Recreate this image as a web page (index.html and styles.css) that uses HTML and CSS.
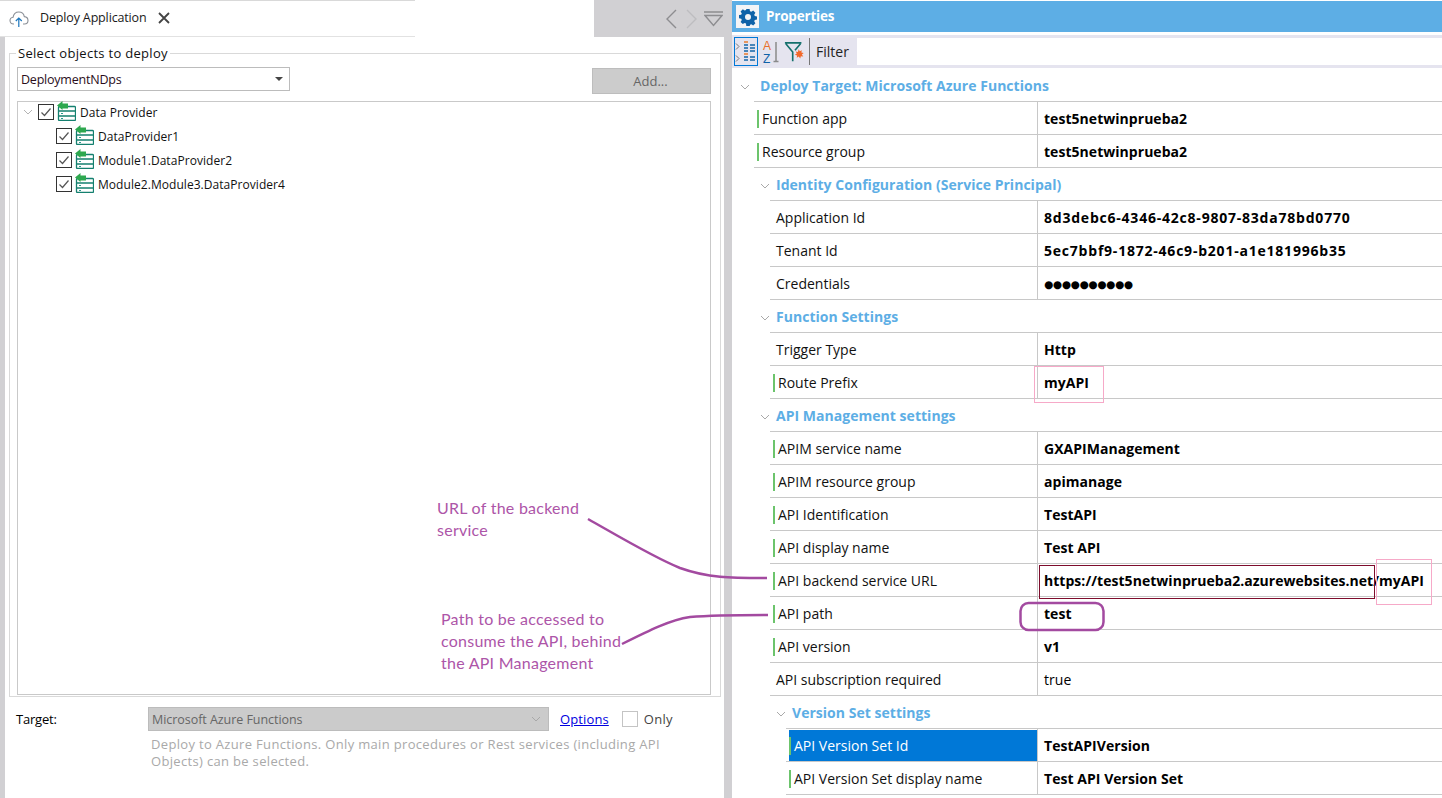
FILE: index.html
```html
<!DOCTYPE html>
<html lang="en">
<head>
<meta charset="utf-8">
<title>Deploy Application</title>
<link rel="stylesheet" href="styles.css">
</head>
<body>
<div class="app">
  <section class="deploy">
    <header class="tabs">
      <div class="tab">
        <svg class="tab-icon" width="20" height="18" viewBox="0 0 20 18"><path class="cloud" d="M5 14H4.500C2.500 14 1 12.500 1 10.600 1 8.800 2.400 7.400 4.100 7.200 4.600 4 7 2 9.800 2c2.700 0 5 1.900 5.500 4.600 2 .2 3.700 1.800 3.700 3.900 0 2-1.600 3.500-3.500 3.500H14"/><path class="cloud-arrow" d="M9.800 17V8M6.800 11l3-3 3 3"/></svg>
        <span class="tab-title">Deploy Application</span>
        <svg class="tab-close" width="12" height="12" viewBox="0 0 12 12"><path d="M1 1l10 10M11 1L1 11"/></svg>
      </div>
      <div class="tab-nav">
        <svg width="12" height="20" viewBox="0 0 12 20"><path class="nav-on" d="M11 1L2 10l9 9"/></svg>
        <svg width="12" height="20" viewBox="0 0 12 20"><path class="nav-off" d="M1 1l9 9-9 9"/></svg>
        <svg class="nav-menu" width="19" height="16" viewBox="0 0 19 16"><path class="nav-on" d="M0 1h19M1 4.500h17L9.500 14.500z"/></svg>
      </div>
    </header>
    <div class="pane">
      <fieldset class="objects">
        <legend>Select objects to deploy</legend>
        <div class="pick-row">
          <div class="combo"><span>DeploymentNDps</span><i class="combo-arrow"></i></div>
          <div class="add-btn">Add...</div>
        </div>
        <div class="tree">
          <div class="tree-row root">
            <svg class="twist" width="10" height="6" viewBox="0 0 10 6"><path d="M1 1l4 4 4-4"/></svg>
            <span class="check"><svg width="14" height="14" viewBox="0 0 14 14"><path d="M2.500 7.500l3 3 6-7"/></svg></span>
            <svg class="dp" width="19" height="20" viewBox="0 0 19 20"><use href="#dp-icon"/></svg>
            <span>Data Provider</span>
          </div>
          <div class="tree-row">
            <span class="check"><svg width="14" height="14" viewBox="0 0 14 14"><path d="M2.500 7.500l3 3 6-7"/></svg></span>
            <svg class="dp" width="19" height="20" viewBox="0 0 19 20"><use href="#dp-icon"/></svg>
            <span>DataProvider1</span>
          </div>
          <div class="tree-row">
            <span class="check"><svg width="14" height="14" viewBox="0 0 14 14"><path d="M2.500 7.500l3 3 6-7"/></svg></span>
            <svg class="dp" width="19" height="20" viewBox="0 0 19 20"><use href="#dp-icon"/></svg>
            <span>Module1.DataProvider2</span>
          </div>
          <div class="tree-row">
            <span class="check"><svg width="14" height="14" viewBox="0 0 14 14"><path d="M2.500 7.500l3 3 6-7"/></svg></span>
            <svg class="dp" width="19" height="20" viewBox="0 0 19 20"><use href="#dp-icon"/></svg>
            <span>Module2.Module3.DataProvider4</span>
          </div>
        </div>
      </fieldset>
      <div class="target">
        <span class="target-label">Target:</span>
        <div class="target-main">
          <div class="target-row">
            <div class="target-combo"><span>Microsoft Azure Functions</span><svg width="10" height="6" viewBox="0 0 10 6"><path d="M1 1l4 4 4-4"/></svg></div>
            <a class="options" href="#">Options</a>
            <span class="only-box"></span>
            <span class="only">Only</span>
          </div>
          <p class="target-desc">Deploy to Azure Functions. Only main procedures or Rest services (including API Objects) can be selected.</p>
        </div>
      </div>
    </div>
  </section>

  <section class="props">
    <header class="props-title">
      <span class="gear-box"><svg width="18" height="18" viewBox="0 0 18 18"><path class="gear" fill-rule="evenodd" d="M7.400 1h3.200l.4 2.200 1.300.6 1.900-1.200 2.200 2.200-1.200 1.900.6 1.300 2.200.4v3.200l-2.200.4-.6 1.300 1.200 1.900-2.200 2.200-1.900-1.200-1.300.6-.4 2.200H7.400L7 15.500l-1.300-.6-1.900 1.200-2.200-2.200 1.200-1.900-.6-1.300L0 10.300V7.100l2.200-.4.6-1.300-1.200-1.900 2.200-2.200 1.900 1.200L7 1.900zM9 6a3 3 0 1 0 0 6 3 3 0 0 0 0-6z"/></svg></span>
      <span class="props-name">Properties</span>
    </header>
    <div class="toolbar">
      <span class="tool tool-on">
        <svg width="22" height="24" viewBox="0 0 22 24"><path class="tb-chev" d="M1 3.500l3 3-3 3M1 15.500l3 3-3 3"/><path class="tb-o" d="M9 2h4M9 14h4"/><path class="tb-b" d="M9 5h4M9 8h4M9 11h4M9 17h4M9 20h4M15 5h5M15 8h5M15 11h5M15 17h5M15 20h5"/></svg>
      </span>
      <span class="tool tool-az">
        <svg width="22" height="26" viewBox="0 0 22 26"><text class="az-a" x="2" y="10.500">A</text><text class="az-z" x="2" y="24">Z</text><path class="az-arrow" d="M15 3v20M12.500 22.500h5"/></svg>
      </span>
      <span class="tool tool-funnel">
        <svg width="24" height="24" viewBox="0 0 24 24"><path class="funnel" d="M1 2h18M2 3l7.500 9v10M18 3l-6 7"/><path class="star" d="M16 9l1.200 2.200 2.300-1.200-.6 2.600 2.600.4-2 1.700 1.500 2.200-2.600-.3-.7 2.500-1.600-2.100-2.200 1.300.4-2.600-2.500-.7 2.200-1.400-1.300-2.200 2.500.5z"/></svg>
      </span>
      <span class="tool-sep"></span>
      <span class="filter-label">Filter</span>
      <span class="filter-input"></span>
    </div>

    <div class="grid">
      <div class="head l1"><svg class="chev" width="10" height="6" viewBox="0 0 10 6"><path d="M1 1l4 4 4-4"/></svg><span class="head-title">Deploy Target: Microsoft Azure Functions</span></div>
      <div class="row l1"><div class="name mark">Function app</div><div class="val">test5netwinprueba2</div></div>
      <div class="row l1"><div class="name mark">Resource group</div><div class="val">test5netwinprueba2</div></div>

      <div class="head l2"><svg class="chev" width="10" height="6" viewBox="0 0 10 6"><path d="M1 1l4 4 4-4"/></svg><span class="head-title">Identity Configuration (Service Principal)</span></div>
      <div class="row l2"><div class="name">Application Id</div><div class="val hash">8d3debc6-4346-42c8-9807-83da78bd0770</div></div>
      <div class="row l2"><div class="name">Tenant Id</div><div class="val hash">5ec7bbf9-1872-46c9-b201-a1e181996b35</div></div>
      <div class="row l2"><div class="name">Credentials</div><div class="val dots">●●●●●●●●●●</div></div>

      <div class="head l2"><svg class="chev" width="10" height="6" viewBox="0 0 10 6"><path d="M1 1l4 4 4-4"/></svg><span class="head-title">Function Settings</span></div>
      <div class="row l2"><div class="name">Trigger Type</div><div class="val">Http</div></div>
      <div class="row l2"><div class="name mark">Route Prefix</div><div class="val">myAPI</div></div>

      <div class="head l2"><svg class="chev" width="10" height="6" viewBox="0 0 10 6"><path d="M1 1l4 4 4-4"/></svg><span class="head-title">API Management settings</span></div>
      <div class="row l2"><div class="name mark">APIM service name</div><div class="val">GXAPIManagement</div></div>
      <div class="row l2"><div class="name mark">APIM resource group</div><div class="val">apimanage</div></div>
      <div class="row l2"><div class="name mark">API Identification</div><div class="val">TestAPI</div></div>
      <div class="row l2"><div class="name mark">API display name</div><div class="val">Test API</div></div>
      <div class="row l2"><div class="name mark">API backend service URL</div><div class="val">https://test5netwinprueba2.azurewebsites.net/myAPI</div></div>
      <div class="row l2"><div class="name mark">API path</div><div class="val">test</div></div>
      <div class="row l2"><div class="name mark">API version</div><div class="val">v1</div></div>
      <div class="row l2"><div class="name">API subscription required</div><div class="val plain">true</div></div>

      <div class="head l3"><svg class="chev" width="10" height="6" viewBox="0 0 10 6"><path d="M1 1l4 4 4-4"/></svg><span class="head-title">Version Set settings</span></div>
      <div class="row l3"><div class="name mark selected">API Version Set Id</div><div class="val">TestAPIVersion</div></div>
      <div class="row l3"><div class="name mark">API Version Set display name</div><div class="val">Test API Version Set</div></div>
    </div>
  </section>
</div>

<svg class="defs" width="0" height="0" aria-hidden="true">
  <symbol id="dp-icon" viewBox="0 0 19 20">
    <rect class="dp-box" x="1.500" y="5.500" width="17" height="14" rx="1"/>
    <path class="dp-line" d="M2 10h16M2 15h16"/>
    <path class="dp-dot" d="M4 12.500h2M4 17.500h2"/>
    <path class="dp-arrow" d="M0 4.500L5.500 0v2.500H11v5H5.500V9z"/>
  </symbol>
</svg>

<svg class="marks" width="1442" height="798" viewBox="0 0 1442 798" aria-hidden="true">
  <rect class="pink" x="1034.500" y="366.500" width="69" height="36"/>
  <rect class="maroon" x="1039.500" y="565.500" width="335" height="33"/>
  <rect class="pink" x="1376.500" y="559.500" width="55" height="45"/>
  <rect class="callout" x="1020.500" y="603" width="83" height="27" rx="8"/>
  <path class="callout" d="M588 519C625 540 655 558 680 568 708 578 730 578 767 578"/>
  <path class="callout" d="M622 644C650 630 670 620 690 617 715 615 740 615 768 615"/>
</svg>
<p class="note note-url">URL of the backend<br>service</p>
<p class="note note-path">Path to be accessed to<br>consume the API, behind<br>the API Management</p>
</body>
</html>
```
FILE: styles.css
```css
* { box-sizing: border-box; }
html, body { margin: 0; padding: 0; }
body {
  width: 1442px;
  height: 798px;
  overflow: hidden;
  position: relative;
  background: #d1d0d3;
  font-family: "Open Sans", "Noto Sans", sans-serif;
  color: #000;
}
.app {
  display: grid;
  grid-template-columns: 724px 710px;
  column-gap: 8px;
  height: 798px;
}

/* Left panel */
.deploy { display: flex; flex-direction: column; height: 798px; }
.tabs { display: flex; height: 37px; flex: none; }
.tab {
  width: 594px;
  background:
    linear-gradient(#d9d9d9, #d9d9d9) 0 0 / 415px 1px no-repeat,
    linear-gradient(#e2e2e2, #e2e2e2) 0 36px / 415px 1px no-repeat,
    #fff;
  display: flex;
  align-items: center;
  padding: 0 0 0 9px;
}
.tab-icon { flex: none; margin-top: 1px; }
.cloud { fill: none; stroke: #8a8f96; stroke-width: 1.100; }
.cloud-arrow { fill: none; stroke: #1b76bd; stroke-width: 1.200; }
.tab-title { margin: -2px 0 0 11px; font-size: 12.500px; letter-spacing: -.15px; color: #1a1a1a; }
.tab-close { margin: -1px 0 0 12px; }
.tab-close path { fill: none; stroke: #444; stroke-width: 1.800; }
.tab-nav { flex: 1; display: flex; align-items: center; padding-left: 71px; gap: 9px; }
.nav-menu { margin-left: -3px; flex: none; }
.nav-on { fill: none; stroke: #8d8d90; stroke-width: 1.400; }
.nav-off { fill: none; stroke: #bdbdc0; stroke-width: 1.400; }

.pane {
  flex: 1;
  margin-left: 5px;
  background: #fff;
  padding: 7px 3px 0 4px;
}
.objects {
  margin: 0;
  padding: 5px 9px 0 7px;
  height: 653px;
  border: 1px solid #d9d9d9;
  min-width: 0;
}
.objects legend {
  margin-left: -1px;
  padding: 0 2px;
  font-size: 13px;
  line-height: 18px;
  letter-spacing: .3px;
  color: #111;
}
.pick-row { display: flex; justify-content: space-between; align-items: flex-start; }
.combo {
  width: 273px;
  height: 24px;
  border: 1px solid #bcbcbc;
  display: flex;
  align-items: center;
  justify-content: space-between;
  padding: 0 3px 0 3px;
  font-size: 12.500px;
  letter-spacing: -.22px;
  color: #2a0d1a;
}
.combo-arrow {
  width: 0; height: 0;
  border-left: 4px solid transparent;
  border-right: 4px solid transparent;
  border-top: 4px solid #444;
  margin-right: 3px;
}
.add-btn {
  width: 119px;
  height: 26px;
  margin-top: 1px;
  background: #cccccc;
  border: 1px solid #bdbdbd;
  display: flex;
  align-items: center;
  justify-content: center;
  padding-right: 2px;
  font-size: 13px;
  color: #666;
}
.tree {
  margin-top: 7px;
  height: 594px;
  border: 1px solid #c9c9c9;
  display: flex;
  flex-direction: column;
  gap: 4px;
}
.tree-row {
  height: 20px;
  display: flex;
  align-items: center;
  padding-left: 38px;
  font-size: 12px;
  letter-spacing: .05px;
  color: #111;
}
.tree-row.root { padding-left: 5px; }
.twist { width: 15px; padding-right: 5px; flex: none; }
.twist path { fill: none; stroke: #b4b4b4; stroke-width: 1; }
.check {
  width: 16px;
  height: 16px;
  flex: none;
  border: 1px solid #333;
  display: flex;
  align-items: center;
  justify-content: center;
  background: #fff;
}
.check path { fill: none; stroke: #555; stroke-width: 1.200; }
.dp { flex: none; margin: 0 4px 0 3px; position: relative; top: -1px; }
.dp-box { fill: #fff; stroke: #14806f; stroke-width: 1.300; }
.dp-line { stroke: #14806f; stroke-width: 1.300; fill: none; }
.dp-dot { stroke: #2a9a8a; stroke-width: 1; fill: none; }
.dp-arrow { fill: #2ea84f; }

.target { display: flex; padding: 10px 0 0 7px; }
.target-label { width: 132px; font-size: 13px; letter-spacing: -.2px; line-height: 24px; flex: none; }
.target-main { flex: 1; }
.target-row { display: flex; align-items: center; height: 24px; font-size: 13px; }
.target-combo {
  width: 401px;
  height: 24px;
  background: #cbcbcb;
  border: 1px solid #bcbcbc;
  display: flex;
  align-items: center;
  justify-content: space-between;
  padding: 0 7px 0 3px;
  font-size: 12.500px;
  letter-spacing: -.05px;
  color: #666;
}
.target-combo path { fill: none; stroke: #a8a8a8; stroke-width: 1; }
.options { margin-left: 11px; color: #0000e0; letter-spacing: .12px; }
.only-box { width: 16px; height: 16px; border: 1px solid #c4c4c4; margin-left: 13px; flex: none; }
.only { margin-left: 6px; color: #444; letter-spacing: .3px; }
.target-desc {
  margin: 5px 0 0 3px;
  width: 530px;
  font-size: 13px;
  line-height: 17px;
  letter-spacing: .33px;
  color: #a9a9a9;
}

/* Right panel */
.props { background: #fff; height: 798px; display: flex; flex-direction: column; }
.props-title {
  margin-top: 1px;
  height: 31px;
  background: #5daee5;
  display: flex;
  align-items: center;
  padding-left: 4px;
  flex: none;
}
.gear-box {
  width: 23px; height: 23px;
  background: #f4f4f6;
  display: flex;
  align-items: center;
  justify-content: center;
}
.gear { fill: #0f62a8; }
.props-name { margin: -1px 0 0 7px; font-size: 13.500px; font-weight: 700; color: #fff; letter-spacing: -.2px; }
.toolbar {
  margin-top: 3px;
  height: 33px;
  flex: none;
  display: flex;
  align-items: center;
  background: #e5e4ef;
  padding-left: 2px;
}
.tool { display: flex; align-items: center; justify-content: center; height: 29px; }
.tool-on { width: 24px; border: 1px solid #0078d7; }
.tool-az { width: 22px; margin-left: 3px; }
.tool-funnel { width: 22px; margin-left: 1px; }
.tb-chev { fill: none; stroke: #777; stroke-width: 1; }
.tb-o { stroke: #e77b2e; stroke-width: 1.300; }
.tb-b { stroke: #1565a8; stroke-width: 1.300; }
.az-a, .az-z { font-family: "Liberation Sans", sans-serif; font-size: 12px; }
.az-a { fill: #e8702a; }
.az-z { fill: #0f62a8; }
.az-arrow { fill: none; stroke: #8a8a8a; stroke-width: 1.500; }
.funnel { fill: none; stroke: #14706c; stroke-width: 1.800; }
.star { fill: #f2682a; }
.tool-sep { width: 1px; height: 27px; background: #777; margin-left: 3px; flex: none; }
.filter-label { margin-left: 6px; width: 41px; font-size: 14px; color: #222; flex: none; }
.filter-input { flex: 1; height: 27px; background: #fff; }

.grid { flex: 1; padding-top: 1px; }
.head { height: 33px; display: flex; align-items: stretch; }
.chev { flex: none; align-self: center; margin-top: 2px; }
.chev path { fill: none; stroke: #a9a9a9; stroke-width: 1; }
.head.l1 { padding-left: 8px; }
.head.l1 .chev { margin-right: 4px; }
.head.l2 { padding-left: 28px; }
.head.l3 { padding-left: 44px; }
.head-title {
  flex: 1;
  border-bottom: 1px solid #c8c8c8;
  padding: 1px 0 0 6px;
  font-size: 14px;
  font-weight: 700;
  line-height: 32px;
  color: #5daee5;
  letter-spacing: .03px;
}
.row {
  height: 33px;
  display: flex;
  border-bottom: 1px solid #c8c8c8;
  font-size: 14px;
  line-height: 32px;
}
.row.l1 { margin-left: 22px; }
.row.l2 { margin-left: 38px; }
.row.l3 { margin-left: 54px; }
.row.l1 .name { width: 283px; }
.row.l2 .name { width: 267px; }
.row.l3 .name { width: 251px; }
.name { flex: none; padding: 1px 0 0 6px; color: #111; display: flex; align-items: center; }
.name.mark { padding-left: 3px; }
.name.mark::before {
  content: "";
  width: 2px;
  height: 18px;
  background: #6cc46c;
  margin-right: 3px;
  flex: none;
}
.row.l3 .name.selected {
  margin-left: 3px;
  width: 248px;
  height: 31px;
  margin-top: 1px;
  padding: 0;
  background: #0078d7;
  color: #fff;
}
.val {
  flex: 1;
  border-left: 1px solid #c8c8c8;
  padding: 1px 0 0 6px;
  font-weight: 700;
  color: #000;
  white-space: nowrap;
  letter-spacing: .04px;
}
.val.plain { font-weight: 400; }
.val.hash { letter-spacing: .78px; }
.val.dots { font-family: "DejaVu Sans", sans-serif; font-size: 10.500px; letter-spacing: -.3px; }

/* Overlays drawn over the screenshot */
.defs { position: absolute; }
.marks { position: absolute; left: 0; top: 0; pointer-events: none; }
.pink { fill: none; stroke: #f6a9c8; stroke-width: 1; }
.maroon { fill: none; stroke: #7d0c2c; stroke-width: 1; }
.callout { fill: none; stroke: #a34aa0; stroke-width: 2.500; }
.note {
  position: absolute;
  margin: 0;
  font-family: Lato, "Open Sans", sans-serif;
  font-size: 16px;
  line-height: 22px;
  letter-spacing: .25px;
  color: #ad55a8;
  white-space: nowrap;
}
.note-url { left: 437px; top: 497px; }
.note-path { left: 441px; top: 608px; }
```
